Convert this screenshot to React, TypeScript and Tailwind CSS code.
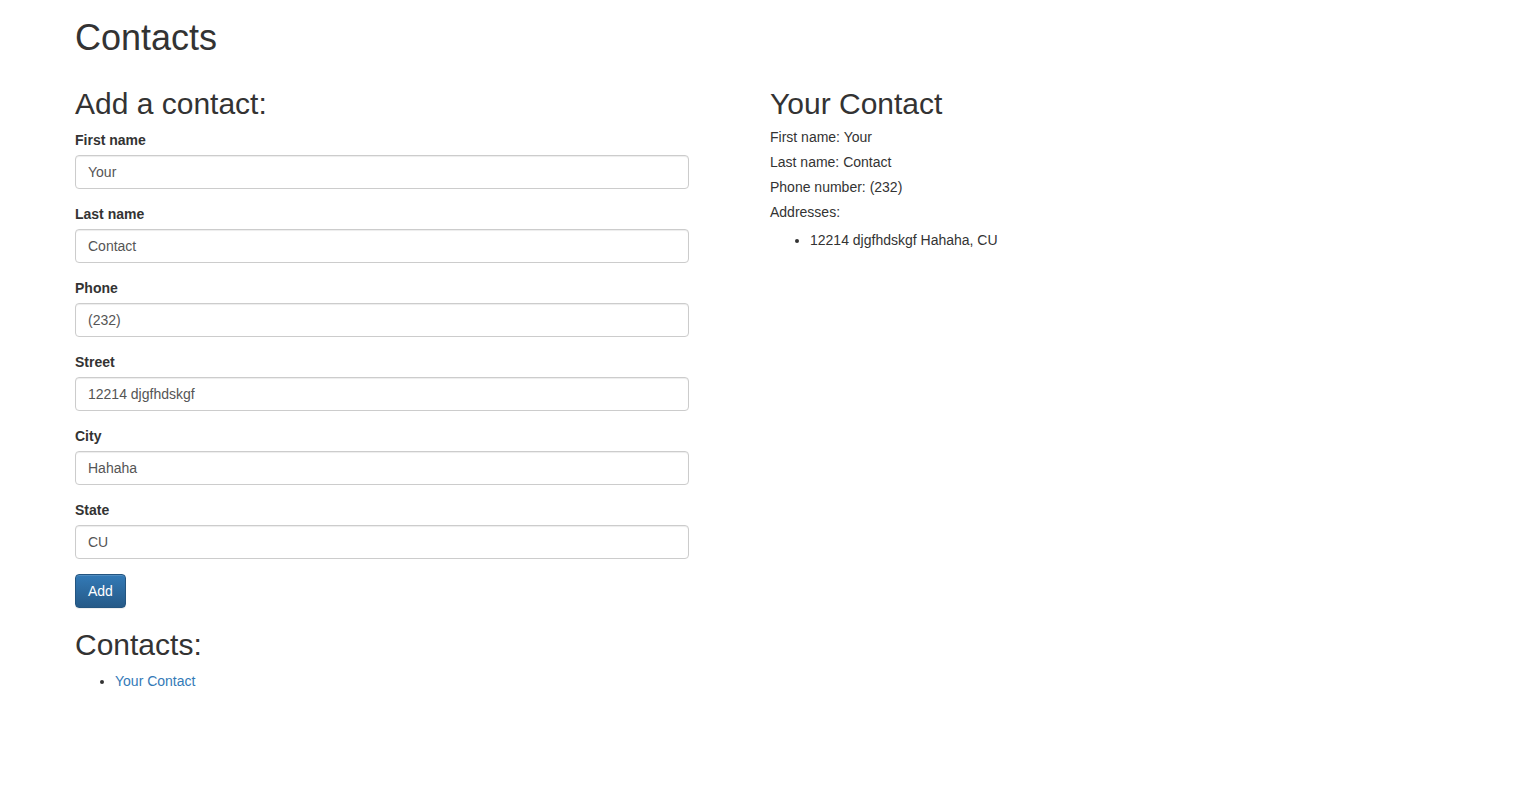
import React, { useState } from 'react';

type Address = { street: string; city: string; state: string };
type Contact = { firstName: string; lastName: string; phone: string; addresses: Address[] };

const FIELDS: { key: string; label: string }[] = [
  { key: 'firstName', label: 'First name' },
  { key: 'lastName', label: 'Last name' },
  { key: 'phone', label: 'Phone' },
  { key: 'street', label: 'Street' },
  { key: 'city', label: 'City' },
  { key: 'state', label: 'State' },
];

export default function App() {
  const [form, setForm] = useState<Record<string, string>>({
    firstName: 'Your',
    lastName: 'Contact',
    phone: '(232)',
    street: '12214 djgfhdskgf',
    city: 'Hahaha',
    state: 'CU',
  });
  const [contacts, setContacts] = useState<Contact[]>([
    {
      firstName: 'Your',
      lastName: 'Contact',
      phone: '(232)',
      addresses: [{ street: '12214 djgfhdskgf', city: 'Hahaha', state: 'CU' }],
    },
  ]);
  const [selected, setSelected] = useState(0);

  const handleAdd = (e: React.FormEvent) => {
    e.preventDefault();
    setContacts(prev => [
      ...prev,
      {
        firstName: form.firstName,
        lastName: form.lastName,
        phone: form.phone,
        addresses: [{ street: form.street, city: form.city, state: form.state }],
      },
    ]);
  };

  const current = contacts[selected];

  return (
    <div className="min-h-screen bg-white text-[14px] leading-[20px] text-[#333] px-[75px] font-['Liberation_Sans',Arial,sans-serif]">
      <h1 className="text-[36px] leading-[1.1] mt-[18px] mb-[9px]">Contacts</h1>

      <div className="flex gap-[81px]">
        <div className="w-[614px] shrink-0">
          <h2 className="text-[30px] leading-[1.1] mt-[20px] mb-[10px]">Add a contact:</h2>
          <form onSubmit={handleAdd}>
            {FIELDS.map(f => (
              <div key={f.key} className="mb-[15px]">
                <label className="inline-block font-bold mb-[5px]">{f.label}</label>
                <input
                  type="text"
                  value={form[f.key]}
                  onChange={e => setForm({ ...form, [f.key]: e.target.value })}
                  className="block w-full h-[34px] px-[12px] py-[6px] text-[14px] text-[#555] bg-white border border-[#ccc] rounded-[4px] shadow-[inset_0_1px_1px_rgba(0,0,0,0.075)] outline-none"
                />
              </div>
            ))}
            <button
              type="submit"
              className="h-[34px] px-[12px] py-[6px] text-white rounded-[4px] border border-[#245580] bg-gradient-to-b from-[#337ab7] to-[#265a88] shadow-[inset_0_1px_0_rgba(255,255,255,0.15),0_1px_1px_rgba(0,0,0,0.075)]"
            >
              Add
            </button>
          </form>

          <h2 className="text-[30px] leading-[1.1] mt-[20px] mb-[10px]">Contacts:</h2>
          <ul className="list-disc pl-[40px]">
            {contacts.map((c, i) => (
              <li key={i}>
                <a
                  href="#"
                  onClick={e => { e.preventDefault(); setSelected(i); }}
                  className="text-[#337ab7] hover:underline"
                >
                  {c.firstName} {c.lastName}
                </a>
              </li>
            ))}
          </ul>
        </div>

        <div className="flex-1">
          <h2 className="text-[30px] leading-[1.1] mt-[20px] mb-[7px]">
            {current.firstName} {current.lastName}
          </h2>
          <div className="mb-[5px]">First name: {current.firstName}</div>
          <div className="mb-[5px]">Last name: {current.lastName}</div>
          <div className="mb-[5px]">Phone number: {current.phone}</div>
          <div className="mb-[8px]">Addresses:</div>
          <ul className="list-disc pl-[40px]">
            {current.addresses.map((a, i) => (
              <li key={i}>{a.street} {a.city}, {a.state}</li>
            ))}
          </ul>
        </div>
      </div>
    </div>
  );
}
